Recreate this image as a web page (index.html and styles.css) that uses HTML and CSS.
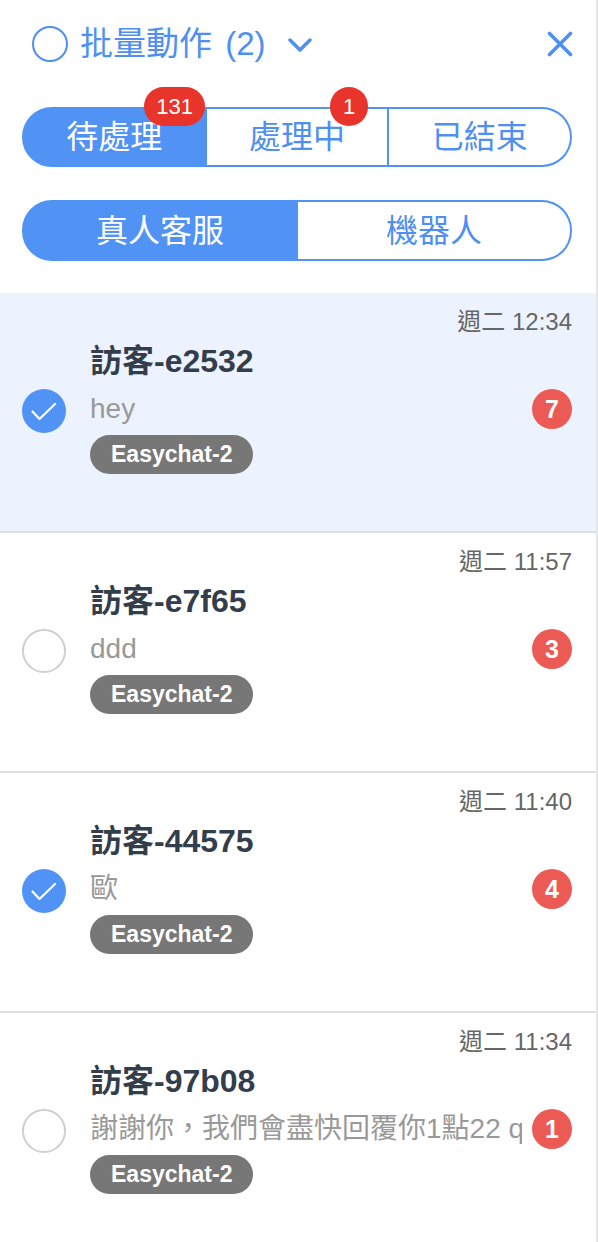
FILE: index.html
```html
<!DOCTYPE html>
<html lang="zh-Hant">
<head>
<meta charset="utf-8">
<title>批量動作</title>
<link rel="stylesheet" href="styles.css">
</head>
<body>
<div class="panel">
  <header class="top">
    <span class="ring"></span>
    <span class="title">批量動作 (2)</span>
    <svg class="chevron" viewBox="0 0 24 16" width="24" height="16"><path d="M2 3 L12 13 L22 3" fill="none" stroke="#4f8ff2" stroke-width="3.5" stroke-linecap="round" stroke-linejoin="round"/></svg>
    <span class="spacer"></span>
    <svg class="close" viewBox="0 0 26 26" width="26" height="26"><path d="M2.5 2.5 L23.5 23.5 M23.5 2.5 L2.5 23.5" fill="none" stroke="#4f8ff2" stroke-width="3.6" stroke-linecap="round"/></svg>
  </header>

  <div class="seg seg-status">
    <div class="seg-item active"><span class="label">待處理<span class="count">131</span></span></div>
    <div class="seg-item"><span class="label">處理中<span class="count count-one">1</span></span></div>
    <div class="seg-item"><span class="label">已結束</span></div>
  </div>

  <div class="seg seg-type">
    <div class="seg-item active"><span class="label">真人客服</span></div>
    <div class="seg-item"><span class="label">機器人</span></div>
  </div>

  <ul class="list">
    <li class="conv selected">
      <span class="check checked"><svg viewBox="0 0 44 44" width="44" height="44"><path d="M10.5 22.5 L17.5 30 L33 15" fill="none" stroke="#fff" stroke-width="2.2" stroke-linecap="round" stroke-linejoin="round"/></svg></span>
      <div class="conv-body">
        <div class="time">週二 12:34</div>
        <div class="name">訪客-e2532</div>
        <div class="msg-row"><span class="msg">hey</span><span class="unread">7</span></div>
        <span class="tag">Easychat-2</span>
      </div>
    </li>
    <li class="conv">
      <span class="check"></span>
      <div class="conv-body">
        <div class="time">週二 11:57</div>
        <div class="name">訪客-e7f65</div>
        <div class="msg-row"><span class="msg">ddd</span><span class="unread">3</span></div>
        <span class="tag">Easychat-2</span>
      </div>
    </li>
    <li class="conv">
      <span class="check checked"><svg viewBox="0 0 44 44" width="44" height="44"><path d="M10.5 22.5 L17.5 30 L33 15" fill="none" stroke="#fff" stroke-width="2.2" stroke-linecap="round" stroke-linejoin="round"/></svg></span>
      <div class="conv-body">
        <div class="time">週二 11:40</div>
        <div class="name">訪客-44575</div>
        <div class="msg-row"><span class="msg">歐</span><span class="unread">4</span></div>
        <span class="tag">Easychat-2</span>
      </div>
    </li>
    <li class="conv">
      <span class="check"></span>
      <div class="conv-body">
        <div class="time">週二 11:34</div>
        <div class="name">訪客-97b08</div>
        <div class="msg-row"><span class="msg">謝謝你，我們會盡快回覆你1點22 q</span><span class="unread">1</span></div>
        <span class="tag">Easychat-2</span>
      </div>
    </li>
  </ul>
</div>
</body>
</html>
```

FILE: styles.css
```css
* { box-sizing: border-box; }
html, body {
  margin: 0;
  padding: 0;
  background: #fff;
}
body {
  font-family: "Liberation Sans", "Noto Sans CJK TC", sans-serif;
  width: 598px;
  height: 1242px;
  overflow: hidden;
}
.panel {
  width: 598px;
  min-height: 1242px;
  border-right: 2px solid #e6e6e6;
  background: #fff;
}

/* header */
.top {
  display: flex;
  align-items: center;
  height: 88px;
  padding: 0 23px 0 32px;
}
.ring {
  width: 36px;
  height: 36px;
  border: 2.5px solid #4f8ff2;
  border-radius: 50%;
  flex: none;
}
.title {
  margin-left: 12px;
  font-size: 33px;
  line-height: 40px;
  color: #4f8ff2;
  word-spacing: 4px;
}
.chevron {
  margin-left: 22px;
  margin-top: 2px;
  flex: none;
}
.spacer { flex: 1; }
.close { flex: none; }

/* segmented controls */
.seg {
  display: flex;
  margin: 0 24px 0 22px;
  height: 60px;
}
.seg-status { margin-top: 19px; }
.seg-type { margin-top: 33px; height: 61px; }
.seg-item {
  flex: 1;
  display: flex;
  align-items: center;
  justify-content: center;
  border: 2px solid #5193f4;
  border-left: none;
  color: #4f8ff2;
  font-size: 32px;
  background: #fff;
}
.seg-item:first-child {
  border-left: 2px solid #5193f4;
  border-radius: 30px 0 0 30px;
}
.seg-item:last-child {
  border-radius: 0 30px 30px 0;
}
.seg-item.active {
  background: #5193f4;
  color: #fff;
}
.label {
  position: relative;
  line-height: 40px;
}
.count {
  position: absolute;
  left: calc(100% - 18px);
  top: -30px;
  min-width: 38px;
  height: 39px;
  padding: 0 12px;
  border-radius: 20px;
  background: #e8342a;
  color: #fff;
  font-size: 22px;
  line-height: 39px;
  text-align: center;
  white-space: nowrap;
}
.count-one {
  left: calc(100% - 15px);
  padding: 0;
}

/* conversation list */
.list {
  list-style: none;
  margin: 32px 0 0;
  padding: 0;
}
.conv {
  display: flex;
  align-items: center;
  height: 240px;
  padding: 0 24px 0 22px;
  border-bottom: 2px solid #dcdfe6;
}
.conv.selected { background: #ecf3fe; }
.check {
  width: 44px;
  height: 44px;
  border-radius: 50%;
  border: 2px solid #cfcfd3;
  background: #fff;
  flex: none;
  margin-top: -2px;
}
.check.checked {
  border: none;
  background: #5193f4;
}
.check svg { display: block; }
.conv-body {
  flex: 1;
  min-width: 0;
  align-self: stretch;
  margin-left: 24px;
  padding-top: 13px;
  display: flex;
  flex-direction: column;
  align-items: flex-start;
}
.time {
  align-self: stretch;
  text-align: right;
  font-size: 24px;
  line-height: 32px;
  color: #666;
}
.name {
  margin-top: 4px;
  font-size: 32px;
  line-height: 38px;
  font-weight: bold;
  color: #333d4b;
}
.msg-row {
  align-self: stretch;
  display: flex;
  align-items: center;
  margin-top: 9px;
  height: 40px;
}
.msg {
  flex: 1;
  min-width: 0;
  overflow: hidden;
  white-space: nowrap;
  font-size: 28px;
  line-height: 40px;
  color: #999;
}
.unread {
  flex: none;
  width: 40px;
  height: 40px;
  margin-left: 10px;
  border-radius: 50%;
  background: #eb5a55;
  color: #fff;
  font-size: 25px;
  font-weight: bold;
  line-height: 40px;
  text-align: center;
}
.tag {
  margin-top: 6px;
  height: 39px;
  padding: 0 21px;
  border-radius: 20px;
  background: #777;
  color: #fff;
  font-size: 23px;
  font-weight: bold;
  line-height: 39px;
}
```
